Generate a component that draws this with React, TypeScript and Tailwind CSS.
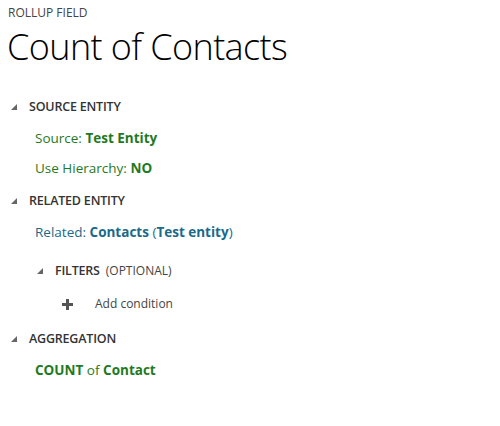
const font = { fontFamily: '"Open Sans", "Noto Sans", sans-serif' };

function Caret({ className = '' }: { className?: string }) {
  return (
    <svg width="6" height="6" viewBox="0 0 6 6" className={className}>
      <polygon points="6,0 6,6 0,6" fill="#666" />
    </svg>
  );
}

function SectionHeader({ label }: { label: string }) {
  return (
    <div className="flex items-center h-[20px]">
      <div className="w-[29px] pl-[11px] flex items-center">
        <Caret />
      </div>
      <span className="text-[12.5px] font-semibold text-[#333] tracking-[-0.2px]">{label}</span>
    </div>
  );
}

export default function App() {
  return (
    <div className="w-[500px] h-[426px] bg-white" style={font}>
      {/* Header */}
      <div className="pl-[8px] pt-[5px]">
        <div className="text-[12px] text-[#444] leading-[16px]">ROLLUP FIELD</div>
        <h1 className="text-[36px] font-light text-black leading-[44px] mt-[4px] -ml-[1px] tracking-[-0.6px]">
          Count of Contacts
        </h1>
      </div>

      <div className="mt-[28px]">
        {/* Source entity */}
        <SectionHeader label="SOURCE ENTITY" />
        <div className="pl-[35px] text-[13.5px] text-[#1f7a1f] mt-[11px] leading-[20px]">
          Source: <span className="font-bold">Test Entity</span>
        </div>
        <div className="pl-[35px] text-[13.5px] text-[#1f7a1f] mt-[10px] leading-[20px]">
          Use Hierarchy: <span className="font-bold">NO</span>
        </div>

        {/* Related entity */}
        <div className="mt-[13px]">
          <SectionHeader label="RELATED ENTITY" />
        </div>
        <div className="pl-[35px] text-[13.5px] text-[#1a6a8a] mt-[11px] leading-[20px]">
          Related: <span className="font-bold">Contacts</span> (<span className="font-bold">Test entity</span>)
        </div>

        {/* Filters */}
        <div className="flex items-center h-[20px] mt-[19px]">
          <div className="w-[55px] pl-[37px] flex items-center">
            <Caret />
          </div>
          <span className="text-[12.5px] font-semibold text-[#333] tracking-[-0.2px]">FILTERS</span>
          <span className="text-[12px] text-[#444] ml-[6px]">(OPTIONAL)</span>
        </div>
        <div className="flex items-center h-[20px] mt-[13px]">
          <div className="w-[95px] pl-[62px] flex items-center">
            <svg width="11" height="11" viewBox="0 0 11 11">
              <rect x="4" y="0" width="3" height="11" fill="#555" />
              <rect x="0" y="4" width="11" height="3" fill="#555" />
            </svg>
          </div>
          <span className="text-[12px] text-[#444]">Add condition</span>
        </div>

        {/* Aggregation */}
        <div className="mt-[15px]">
          <SectionHeader label="AGGREGATION" />
        </div>
        <div className="pl-[35px] text-[13.5px] text-[#1f7a1f] mt-[11px] leading-[20px]">
          <span className="font-bold">COUNT</span> of <span className="font-bold">Contact</span>
        </div>
      </div>
    </div>
  );
}
